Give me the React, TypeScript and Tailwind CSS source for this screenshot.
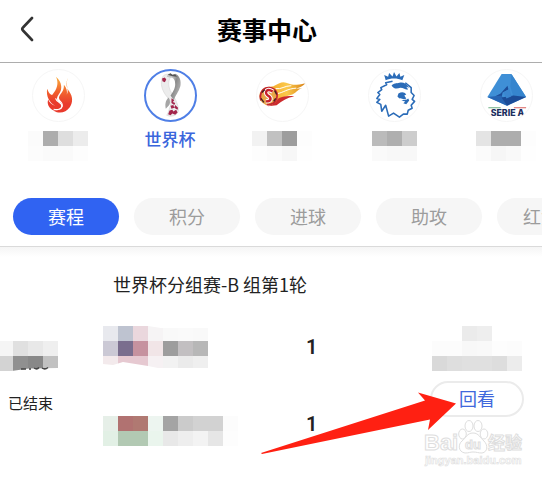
import type { ReactNode } from 'react';

type MosaicProps = { rows: string[][]; className?: string };

function Mosaic({ rows, className = '' }: MosaicProps) {
  return (
    <div aria-hidden="true" className={`flex shrink-0 flex-col ${className}`}>
      {rows.map((row, y) => (
        <div key={y} className="flex justify-end">
          {row.map((color, x) => (
            <span key={x} className="size-[15px] shrink-0" style={{ backgroundColor: color }} />
          ))}
        </div>
      ))}
    </div>
  );
}

function FlameLogo() {
  return (
    <svg viewBox="0 0 52 52" className="size-full" aria-hidden="true">
      <defs>
        <linearGradient id="flame" x1="0" y1="0" x2="0" y2="1">
          <stop offset="0" stopColor="#f9b03c" />
          <stop offset="0.4" stopColor="#f2662f" />
          <stop offset="0.75" stopColor="#e93a2c" />
        </linearGradient>
      </defs>
      <path
        fill="url(#flame)"
        d="M23.500 7C30 13 30 20 26.500 24.500C23.500 28.500 24 31.500 27 33C30.500 34 30 38 27 40C24.500 42 22 42 19.500 40.500C16 38 14 34 15.500 30C16.500 33 19 35 22.500 36.500C17 33 13 27 14.500 19C16 23 17 24.500 19.500 25.500C24.500 20 26.500 14 23.500 7Z"
      />
      <path
        fill="url(#flame)"
        d="M36 8C33 13 34 18 37 22C40.500 27 41 33 37.500 38C33.500 43.500 27 45 21 41.500C27 41.500 32 39 30 34C29 31.500 26.500 31 26.500 28C27 24.500 32 22 31.500 15C34.500 18.500 35 22 34.500 25C37.500 20 32 15 36 8Z"
      />
      <path fill="none" stroke="#fff" strokeWidth="1.200" d="M23 29C24 33 30 33 29.500 37C29 40 25 41 21 40" />
    </svg>
  );
}

function WorldCupLogo() {
  return (
    <svg viewBox="0 0 52 52" className="size-full" aria-hidden="true">
      <defs>
        <linearGradient id="ribbon" x1="0.5" y1="0" x2="1" y2="0.3">
          <stop offset="0" stopColor="#c4c4c4" />
          <stop offset="0.5" stopColor="#8b8b8b" />
          <stop offset="1" stopColor="#a6a6a6" />
        </linearGradient>
      </defs>
      <path fill="#ececec" stroke="#d2d2d2" strokeWidth="0.600" d="M20 4C23 3 26 3 28 5C23 8 23 17 27 23C30 28 34 34 34.500 41C34 48 26 49 22 47C24 44 24.500 40 26 37C27 33 25 31 22 27C18 22 15.500 16 16.500 10C17 7 18 5 20 4Z" />
      <path fill="url(#ribbon)" d="M23 4L26 2.500L28 4L31 3C36 5 37.500 11 36.500 16C35 22 31 26 29.500 31L26 26C28 23 31 19 31 14C31 9 29 7 25 7L22 6Z" />
      <path fill="#a5a5a5" d="M24 28C20.500 31 20 36 21 40L24 37C26 35 26 31 24 28Z" />
      <path fill="#555" d="M23 4L26 2.500L28 4L31 3.500L33 6L28 5.500Z" />
      <g fill="#a3264c">
        <path d="M17 8L20 7L21.500 9L20 12L17.500 11ZM27 29L30 31L28.500 33L31 34L30 36L27 34ZM31 36L34 39L33.500 41L30 39ZM26 37L29 36L30 39L27 40ZM25 42L28 41L29 43L32 41L33.500 44L31 46.500L28 45L26 47L23.500 46Z" />
      </g>
    </svg>
  );
}

function FireballLogo() {
  return (
    <svg viewBox="0 0 52 52" className="size-full" aria-hidden="true">
      <defs>
        <linearGradient id="trail" x1="0" x2="1">
          <stop offset="0" stopColor="#f3a62a" />
          <stop offset="0.5" stopColor="#fbc94a" />
          <stop offset="1" stopColor="#d98318" />
        </linearGradient>
      </defs>
      <path fill="url(#trail)" d="M12 17C18 18 20 13 27 12.500C31 12.500 33 15 37 15C42 15 45 15 49 13.500C47 17 43 17.500 40 19L46 18.500C41 20 40 23 36 25C31 26 26 28 22 32Z" />
      <path fill="none" stroke="#fff" strokeWidth="1" d="M19 19C25 20 28 16 35 16M21 24C27 23 31 19 40 18.500" />
      <path fill="#cc2b2d" d="M20 30C26 27 31 26 38 27C31 28 26 31 20 36L11 37C15 36 18 33 20 30Z" />
      <circle cx="12" cy="26.500" r="9.500" fill="#e8a648" />
      <path fill="none" stroke="#c22630" strokeWidth="1.800" d="M4 31C2 24 6 18 12 18C18 18 22 23 20 29C19 33 15 36 10 35" />
      <path fill="none" stroke="#fff" strokeWidth="4.500" d="M16 22C10 18 7 23 11 26C15 28 15 32 9 32" />
      <path fill="none" stroke="#c8202c" strokeWidth="2.500" d="M16 22C10 18 7 23 11 26C15 28 15 32 9 32" />
      <path stroke="#402022" strokeWidth="1.400" d="M5 23L8 20M18 21L20 25M4 29L7 33M17 32L19 29" />
    </svg>
  );
}

function LionLogo() {
  return (
    <svg viewBox="0 0 52 52" className="size-full" aria-hidden="true">
      <g fill="#2b6cb8">
        <path d="M17 10.500L15.500 5L19.500 7L20.500 3L24 6.500L25.500 2L28 6.500L31 3L32 7L36 5L34 10.500C29 8 22 8 17 10.500Z" />
        <path d="M23 16C25 13 28 14 31 13C35 12 38 14 41 18L38 17L40 20C37 20 35 18 32 18C29 19 26 20 23 16ZM30 24C33 22 36 22 38 25L36 26L38 29C35 31 33 28 31 29L29 27ZM33 31C36 30 38 31 40 29L41 31L38 35L35 34L37 32Z" />
      </g>
      <path
        fill="none"
        stroke="#2b6cb8"
        strokeWidth="1.600"
        strokeLinejoin="round"
        d="M24 11.500L17 13L18 15L12 18L13 20L9 23L11 25L8 29L11 30L8 33L12 35L13 42L17 36L20 47L25 44L31 48L35 45L39 45L40 41L44 39L43 36L46.500 32L44 30L46 26L43 23L43 18L37 13"
      />
    </svg>
  );
}

function SerieALogo() {
  return (
    <svg viewBox="0 0 52 52" className="size-full" aria-hidden="true">
      <path fill="#3f8fd6" d="M21 4H31L46 27.500L26.500 36.500L6.500 27.500Z" />
      <path fill="#3685ce" d="M31 4L46 27.500L33 27L30 17Z" />
      <path fill="#1d4d99" d="M27 16L28 20L22 23L21 28L14 27L20 24Z" />
      <path fill="#2664b3" d="M6.500 27.500L21 26L26.500 36.500Z" />
      <path fill="#1c4c98" d="M21 28L33 26L46 27.500L26.500 36.500Z" />
      <path fill="#3b86d0" d="M23 23L29 19L31 27L26 29Z" />
      <path stroke="#6cae83" strokeWidth="1.200" d="M7.500 38.500H20" />
      <path stroke="#d8625f" strokeWidth="1.200" d="M33.500 38.500H46" />
      <text x="27" y="47" textAnchor="middle" fontFamily="Inter, sans-serif" fontSize="9" fontWeight="800" fill="#1d2f60">
        SERIE A
      </text>
    </svg>
  );
}

type League = { logo: ReactNode; label?: string; mosaic?: string[][] };

const leagues: League[] = [
  {
    logo: <FlameLogo />,
    mosaic: [
      ['#fbfbfb', '#adadad', '#dedede', '#ececec'],
      ['#fcfcfc', '#fafafa', '#fafafa', '#fdfdfd'],
    ],
  },
  { logo: <WorldCupLogo />, label: '世界杯' },
  {
    logo: <FireballLogo />,
    mosaic: [
      ['#f2f2f2', '#c1c1c1', '#9d9d9d', '#fdfdfd'],
      ['#fdfdfd', '#fbfbfb', '#f7f7f7', '#fefefe'],
    ],
  },
  {
    logo: <LionLogo />,
    mosaic: [
      ['#bbbbbb', '#afafaf', '#cdcdcd'],
      ['#fafafa', '#f8f8f8', '#f8f8f8'],
    ],
  },
  {
    logo: <SerieALogo />,
    mosaic: [
      ['#e4e4e4', '#adadad', '#adadad', '#fdfdfd'],
      ['#fbfbfb', '#f6f6f6', '#f9f9f9', '#fefefe'],
    ],
  },
];

const tabs = ['赛程', '积分', '进球', '助攻', '红黄榜'];

const timeMosaic = [
  ['#f5f5f5', '#e0e0e0', '#e8e8e8', '#efefef'],
  ['#d3d3d3', '#909090', '#888888', '#c1c1c1'],
];

const homeMosaic = [
  ['#e8e9ee', '#bec3d0', '#ead7dd', '#f6f4f5', '#f9f9f9', '#fafafa', '#f9f9f9'],
  ['#cbc9d5', '#7a6e8e', '#c6929f', '#f1e5e7', '#9d9d9d', '#c2bfc1', '#b7b7b7'],
  ['#f3eaec', '#e6c9d1', '#e6c9d1', '#f6f1f3', '#f2f2f2', '#ebebeb', '#efefef'],
];

const awayMosaic = [
  ['#e6efe8', '#b17271', '#b07972', '#edf5f0', '#a4a4a4', '#cbcbcb', '#d2d2d2', '#d2d2d2', '#fcfcfc'],
  ['#e2f0e5', '#b2c9b3', '#b2c9b3', '#eaf5ed', '#e8e8e8', '#eeeeee', '#f3f3f3', '#e6e6e6', '#fdfdfd'],
];

const sourceMosaic = [
  ['#ffffff', '#ffffff', '#ebebeb', '#eeeeee', '#ffffff', '#ffffff'],
  ['#fcfcfc', '#fcfcfc', '#f8f8f8', '#f9f9f9', '#fdfdfd', '#fcfcfc'],
  ['#d9d9d9', '#dedede', '#e0e0e0', '#e0e0e0', '#dddddd', '#ececec'],
];

function Watermark() {
  return (
    <svg viewBox="0 0 104 52" className="absolute top-[418px] left-[421px] h-[52px] w-[104px]" aria-label="Baidu 经验">
      <g fill="#fff" stroke="#dedede" strokeWidth="1" fontFamily='"Liberation Sans", sans-serif' fontWeight="700">
        <text x="3" y="32" fontSize="22">Bai</text>
        <ellipse cx="41.500" cy="16" rx="3.800" ry="5" />
        <ellipse cx="48" cy="8" rx="4" ry="5.500" />
        <ellipse cx="57" cy="8" rx="4" ry="5.500" />
        <ellipse cx="63" cy="16" rx="3.800" ry="5" />
        <path d="M52 15C46 15 45 20 41 23C37 26 37 34 44 35C48 35 49 34 52 34C56 34 57 35 61 35C67 34 67 27 63 23C59 20 58 15 52 15Z" />
        <text x="44" y="31" fontSize="13">du</text>
        <text x="67" y="31" fontSize="17" fontFamily='"Noto Sans CJK SC", sans-serif'>经验</text>
        <text x="4" y="46" fontSize="11" strokeWidth="0.600">jingyan.baidu.com</text>
      </g>
    </svg>
  );
}

function Arrow() {
  return (
    <svg viewBox="0 0 196 62" className="absolute top-[392px] left-[260px] h-[62px] w-[196px]" aria-hidden="true">
      <path fill="#ff2012" d="M1 61L165 8.500L158 0.500L196 11.500L168 38L170 27.500L2 62Z" />
    </svg>
  );
}

export default function App() {
  return (
    <div className="relative overflow-hidden bg-white pr-3 font-['Noto_Sans_CJK_SC',sans-serif] text-[#222]">
      <header className="flex h-[63px] items-center border-b border-[#adadad] pb-1">
        <button type="button" aria-label="返回" className="flex w-10 justify-end pr-1.5">
          <svg viewBox="0 0 14 28" className="h-7 w-3.5" fill="none" stroke="#333" strokeWidth="2.600" strokeLinecap="round" strokeLinejoin="round" aria-hidden="true">
            <path d="M12 3L3 12.500Q1.500 14 3 15.500L12 25" />
          </svg>
        </button>
        <h1 className="flex-1 text-center text-[25px] leading-8 font-bold text-black">赛事中心</h1>
        <span className="w-12" />
      </header>

      <ul className="flex overflow-hidden pt-1.5 pl-0.5">
        {leagues.map((league, i) => (
          <li key={i} className="w-28 shrink-0">
            <button type="button" aria-label={league.label ?? '联赛'} className="flex w-full flex-col items-center gap-[9px]">
              <span
                className={`size-[53px] overflow-hidden rounded-full ${
                  league.label ? 'border-2 border-[#4f7fe6]' : 'border border-[#f6f6f6]'
                }`}
              >
                {league.logo}
              </span>
              {league.label && <span className="text-[17px] leading-4 font-medium text-[#3a66dc]">{league.label}</span>}
              {league.mosaic && <Mosaic rows={league.mosaic} />}
            </button>
          </li>
        ))}
      </ul>

      <nav className="mt-[37px] flex gap-[15px] overflow-hidden border-b border-[#dadada] pb-[11px] pl-[13px]">
        {tabs.map((tab, i) => (
          <button
            key={tab}
            type="button"
            className={`h-[37px] w-[106px] shrink-0 rounded-full pb-0.5 text-[18px] leading-6 ${
              i === 0 ? 'bg-[#3063f2] text-white' : 'bg-[#f6f6f6] text-[#9c9c9c]'
            }`}
          >
            {tab}
          </button>
        ))}
      </nav>

      <main className="bg-linear-to-b from-[#f5f5f5] to-white to-[10px] pt-[25px] pb-8">
        <h2 className="pl-[113px] text-[18px] leading-6">世界杯分组赛-B 组第1轮</h2>
        <section className="mt-[30px] flex items-start">
          <div className="w-[103px] pt-[15px]">
            <div className="relative w-[58px] overflow-hidden">
              <Mosaic rows={timeMosaic} className="[clip-path:polygon(0_0,100%_0,100%_90%,50%_92%,20%_100%,0_100%)]" />
              <svg viewBox="0 0 30 5" className="absolute bottom-0 left-5 h-[5px] w-[30px]" fill="none" stroke="#444" strokeWidth="1.500" aria-hidden="true">
                <path d="M1 3H6M9 3H11M14 2Q17 4 19 1.500M22 2Q25 4 28 1.500" />
              </svg>
            </div>
            <p className="mt-5 pl-2 text-[15px] leading-6">已结束</p>
          </div>
          <div className="flex flex-1 flex-col items-start gap-[45px]">
            <Mosaic
              rows={homeMosaic}
              className="[clip-path:polygon(0_0,45px_0,58px_2px,105px_2px,105px_42px,55px_42px,45px_40px,20px_36px,10px_39px,0_38px)]"
            />
            <Mosaic rows={awayMosaic} />
          </div>
          <div className="flex w-[124px] flex-col gap-[53px] pt-[9px] font-['Roboto',sans-serif] text-[20px] leading-6 font-semibold">
            <span>1</span>
            <span>1</span>
          </div>
          <div className="mr-[18px] flex flex-col items-center gap-2.5">
            <Mosaic rows={sourceMosaic} />
            <button type="button" className="h-9 w-[94px] rounded-full border-2 border-[#ebebeb] pb-0.5 text-[18px] leading-6 text-[#4068dc]">
              回看
            </button>
          </div>
        </section>
      </main>

      <Watermark />
      <Arrow />
    </div>
  );
}
